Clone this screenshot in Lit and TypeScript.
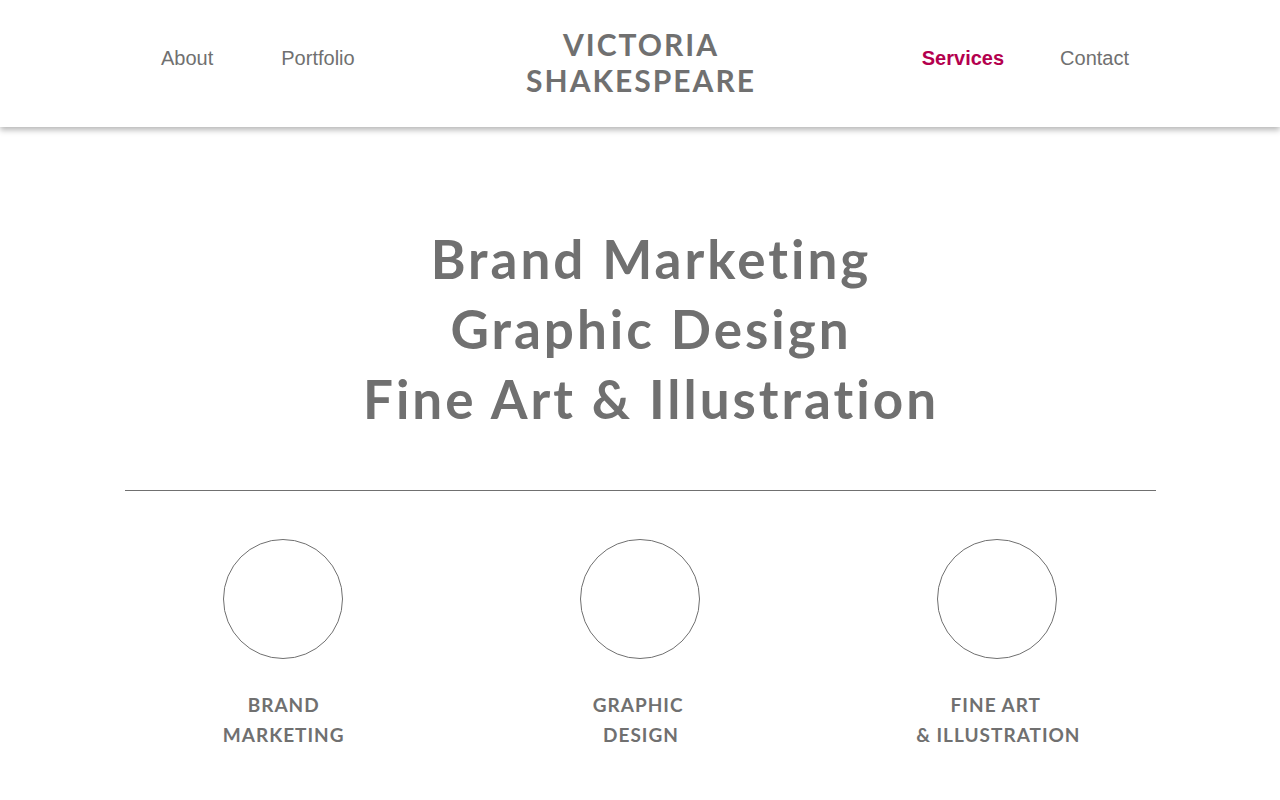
import { LitElement, html, css } from "lit";
import { customElement } from "lit/decorators.js";

@customElement("app-root")
export class AppRoot extends LitElement {
  static styles = css`
    :host {
      display: block;
      min-height: 100vh;
      background: #fff;
      color: #707070;
      font-family: Lato, sans-serif;
      font-weight: 700;
    }
    header {
      box-sizing: border-box;
      display: grid;
      grid-template-columns: 1fr auto 1fr;
      align-items: start;
      padding: 26px 151px 29px 153px;
      box-shadow: 0 3px 6px rgba(0, 0, 0, 0.29);
    }
    nav {
      display: flex;
      gap: 68px;
      padding: 20px 0 0 8px;
      font: 20px/24px "Liberation Sans", Arial, sans-serif;
    }
    nav.end {
      justify-content: flex-end;
      gap: 56px;
    }
    a {
      color: inherit;
      text-decoration: none;
    }
    a.current {
      color: #b4004e;
      font-weight: 700;
    }
    .brand {
      font-size: 30px;
      line-height: 36px;
      letter-spacing: 2px;
      text-align: center;
    }
    h1 {
      margin: 0;
      padding: 97px 0 56px 22px;
      font-size: 53px;
      line-height: 70px;
      letter-spacing: 3px;
      text-align: center;
    }
    hr {
      margin: 0 124px 0 125px;
      border: 0;
      border-top: 1px solid #707070;
    }
    .services {
      display: grid;
      grid-template-columns: repeat(3, 1fr);
      padding: 48px 104px;
    }
    .service {
      display: flex;
      flex-direction: column;
      align-items: center;
      gap: 31px;
    }
    .circle {
      box-sizing: border-box;
      width: 120px;
      height: 120px;
      border: 1px solid #707070;
      border-radius: 50%;
    }
    h2 {
      margin: 0;
      padding-left: 2px;
      font-size: 19px;
      line-height: 30px;
      letter-spacing: 1px;
      text-align: center;
    }
  `;

  private services = [
    ["BRAND", "MARKETING"],
    ["GRAPHIC\u00a0", "DESIGN"],
    ["FINE ART\u00a0", "& ILLUSTRATION"],
  ];

  render() {
    return html`
      <header>
        <nav aria-label="Work"><a href="#about">About</a><a href="#portfolio">Portfolio</a></nav>
        <a class="brand" href="#home">VICTORIA<br />SHAKESPEARE</a>
        <nav class="end" aria-label="Services and contact">
          <a class="current" href="#services" aria-current="page">Services</a><a href="#contact">Contact</a>
        </nav>
      </header>
      <main>
        <h1>Brand Marketing<br />Graphic Design<br />Fine Art &amp; Illustration</h1>
        <hr />
        <section class="services">
          ${this.services.map(
            ([first, second]) => html`
              <article class="service">
                <div class="circle"></div>
                <h2>${first}<br />${second}</h2>
              </article>
            `
          )}
        </section>
      </main>
    `;
  }
}
